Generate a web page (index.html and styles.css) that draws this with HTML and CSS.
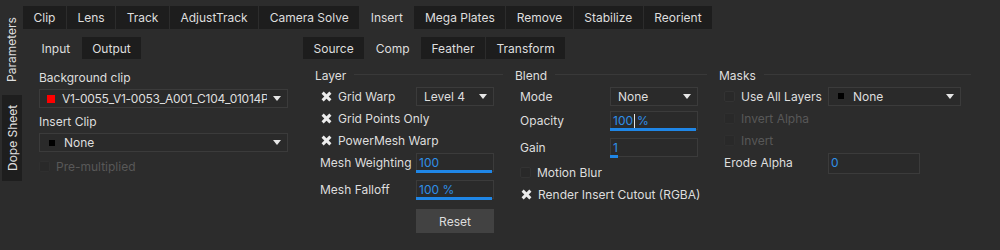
FILE: index.html
```html
<!DOCTYPE html>
<html lang="en">
<head>
    <meta charset="UTF-8">
    <title>Insert - Comp</title>
    <link rel="stylesheet" href="styles.css">
</head>
<body>
    <div class="app">
        <div class="side">
            <div class="vtab active">Parameters</div>
            <div class="vtab">Dope Sheet</div>
        </div>

        <div class="main">
            <div class="tabs top">
                <div class="tab">Clip</div>
                <div class="tab">Lens</div>
                <div class="tab">Track</div>
                <div class="tab">AdjustTrack</div>
                <div class="tab">Camera Solve</div>
                <div class="tab active">Insert</div>
                <div class="tab">Mega Plates</div>
                <div class="tab">Remove</div>
                <div class="tab">Stabilize</div>
                <div class="tab">Reorient</div>
            </div>

            <div class="panel">
                <!-- input / output side -->
                <div class="left">
                    <div class="tabs sub">
                        <div class="tab active">Input</div>
                        <div class="tab">Output</div>
                    </div>
                    <div class="left-body">
                        <div class="label first">Background clip</div>
                        <div class="select wide">
                            <span class="swatch red"></span>
                            <span class="value clip-name">V1-0055_V1-0053_A001_C104_01014P</span>
                            <span class="arrow"></span>
                        </div>
                        <div class="label">Insert Clip</div>
                        <div class="select wide">
                            <span class="swatch small"></span>
                            <span class="value">None</span>
                            <span class="arrow"></span>
                        </div>
                        <div class="check disabled premult"><span class="box"></span>Pre-multiplied</div>
                    </div>
                </div>

                <!-- comp side -->
                <div class="right">
                    <div class="tabs sub">
                        <div class="tab">Source</div>
                        <div class="tab active">Comp</div>
                        <div class="tab">Feather</div>
                        <div class="tab">Transform</div>
                    </div>

                    <div class="groups">
                        <div class="group layer">
                            <div class="group-title">Layer</div>
                            <div class="row">
                                <div class="check on w-layer"><span class="x"></span>Grid Warp</div>
                                <div class="select level"><span class="value">Level 4</span><span class="arrow"></span></div>
                            </div>
                            <div class="row">
                                <div class="check on"><span class="x"></span>Grid Points Only</div>
                            </div>
                            <div class="row">
                                <div class="check on"><span class="x"></span>PowerMesh Warp</div>
                            </div>
                            <div class="row field">
                                <div class="field-label w-layer">Mesh Weighting</div>
                                <div class="num level"><span class="value">100</span><span class="bar" style="width: 100%"></span></div>
                            </div>
                            <div class="row field">
                                <div class="field-label w-layer">Mesh Falloff</div>
                                <div class="num level"><span class="value">100 %</span><span class="bar" style="width: 100%"></span></div>
                            </div>
                            <div class="row btn-row">
                                <button class="reset">Reset</button>
                            </div>
                        </div>

                        <div class="group blend">
                            <div class="group-title">Blend</div>
                            <div class="row">
                                <div class="field-label w-blend">Mode</div>
                                <div class="select mode"><span class="value">None</span><span class="arrow"></span></div>
                            </div>
                            <div class="row field opacity-row">
                                <div class="field-label w-blend">Opacity</div>
                                <div class="num mode"><span class="value">100<span class="caret"></span>%</span><span class="bar" style="width: 100%"></span></div>
                            </div>
                            <div class="row field gain-row">
                                <div class="field-label w-blend">Gain</div>
                                <div class="num mode"><span class="value">1</span><span class="bar" style="width: 9%"></span></div>
                            </div>
                            <div class="row">
                                <div class="check"><span class="box"></span>Motion Blur</div>
                            </div>
                            <div class="row">
                                <div class="check on"><span class="x"></span>Render Insert Cutout (RGBA)</div>
                            </div>
                        </div>

                        <div class="group masks">
                            <div class="group-title">Masks</div>
                            <div class="row">
                                <div class="check w-masks"><span class="box"></span>Use All Layers</div>
                                <div class="select mask-sel">
                                    <span class="swatch small"></span>
                                    <span class="value">None</span>
                                    <span class="arrow"></span>
                                </div>
                            </div>
                            <div class="row">
                                <div class="check disabled"><span class="box"></span>Invert Alpha</div>
                            </div>
                            <div class="row">
                                <div class="check disabled"><span class="box"></span>Invert</div>
                            </div>
                            <div class="row field">
                                <div class="field-label w-masks">Erode Alpha</div>
                                <div class="num erode"><span class="value">0</span></div>
                            </div>
                        </div>
                    </div>
                </div>
            </div>
        </div>
    </div>
</body>
</html>
```

FILE: styles.css
```css
* {
    box-sizing: border-box;
}
body {
    margin: 0;
    background-color: #2c2c2c;
    color: #dedede;
    font-family: Inter, "Noto Sans", sans-serif;
    font-size: 12px;
}
.app {
    display: flex;
    width: 1000px;
    height: 250px;
    overflow: hidden;
}

/* vertical tabs on the left */
.side {
    width: 23px;
    display: flex;
    flex-direction: column;
    gap: 3px;
}
.vtab {
    writing-mode: vertical-rl;
    transform: rotate(180deg);
    display: flex;
    align-items: center;
    justify-content: center;
    width: 20px;
    margin-left: 2px;
    background-color: #1e1e1e;
}
.vtab.active {
    background-color: #2c2c2c;
    height: 84px;
    margin-top: 8px;
    margin-left: 0;
    width: 22px;
}
.vtab:not(.active) {
    height: 86px;
}

.main {
    flex: 1;
    display: flex;
    flex-direction: column;
}

/* tab rows */
.tabs {
    display: flex;
    gap: 1px;
}
.tab {
    background-color: #1d1d1d;
    padding: 0 10.5px;
    display: flex;
    align-items: center;
}
.tab.active {
    background-color: #2c2c2c;
}
.tabs.top {
    margin-top: 6px;
    height: 23px;
}
.tabs.sub {
    height: 22px;
}

.panel {
    display: flex;
    margin-top: 8px;
}
.left {
    width: 280px;
    padding-left: 8px;
}
.left-body {
    padding-left: 8px;
}
.right {
    flex: 1;
}

.label {
    height: 19px;
    display: flex;
    align-items: center;
    margin-top: 4px;
    margin-bottom: 2px;
}
.label.first {
    margin-top: 9px;
    margin-bottom: 2px;
}

/* dropdowns and number fields */
.select, .num {
    height: 19px;
    border: 1px solid #3b3b3b;
    background-color: #2a2a2a;
    display: flex;
    align-items: center;
    padding: 0 6px 0 7px;
    position: relative;
}
.select .value {
    flex: 1;
    white-space: nowrap;
    overflow: hidden;
}
.clip-name {
    letter-spacing: -0.25px;
}
.select.wide {
    width: 249px;
}
.arrow {
    width: 0;
    height: 0;
    border-left: 4px solid transparent;
    border-right: 4px solid transparent;
    border-top: 5px solid #e6e6e6;
    margin-left: 6px;
}
.swatch {
    width: 8px;
    height: 8px;
    background-color: #000;
    margin-right: 7px;
}
.swatch.red {
    background-color: #ff0000;
}
.swatch.small {
    width: 6px;
    height: 6px;
    margin-right: 9px;
    margin-left: 2px;
}

.num {
    color: #2f8fe8;
    padding-left: 2px;
    align-items: flex-start;
    padding-top: 1px;
}
.num .bar {
    position: absolute;
    left: -1px;
    bottom: -2px;
    height: 3px;
    background-color: #1f86e6;
}
.caret {
    display: inline-block;
    width: 1px;
    height: 14px;
    background-color: #e6e6e6;
    vertical-align: -3px;
    margin: 0 2px 0 1px;
}

/* checkboxes */
.check {
    display: flex;
    align-items: center;
    white-space: nowrap;
}
.check .box {
    width: 11px;
    height: 11px;
    border: 1px solid #333;
    background-color: #292929;
    border-radius: 2px;
    margin-right: 6px;
}
.check .x {
    width: 9px;
    height: 9px;
    margin: 0 7px 0 2px;
    position: relative;
}
.check .x::before, .check .x::after {
    content: "";
    position: absolute;
    left: -1px;
    top: 3px;
    width: 11px;
    height: 3px;
    background-color: #ececec;
    transform: rotate(45deg);
}
.check .x::after {
    transform: rotate(-45deg);
}
.check.disabled {
    color: #585858;
}
.check.disabled .box {
    border-color: #2f2f2f;
}
.premult {
    height: 22px;
    margin-top: 3px;
}

/* option groups */
.groups {
    display: flex;
    margin-top: 8px;
}
.group {
    padding-left: 12px;
}
.group.layer {
    width: 200px;
}
.group.blend {
    width: 204px;
}
.group.masks {
    width: 264px;
}
.group-title {
    display: flex;
    align-items: center;
    height: 17px;
    margin-bottom: 1px;
}
.group-title::after {
    content: "";
    flex: 1;
    height: 1px;
    background-color: #393939;
    margin-left: 8px;
    margin-top: -3px;
}
.row {
    display: flex;
    align-items: center;
    height: 22px;
    padding-left: 5px;
}
.row.field {
    height: 27px;
    align-items: flex-start;
    padding-top: 2px;
}
.row.field .field-label {
    height: 19px;
    display: flex;
    align-items: center;
}
.row.opacity-row {
    height: 29px;
    padding-top: 4px;
}
.row.gain-row {
    height: 25px;
}
.w-layer {
    width: 96px;
}
.w-blend {
    width: 90px;
}
.w-masks {
    width: 104px;
}
.level {
    width: 78px;
}
.mode {
    width: 88px;
}
.mask-sel {
    width: 133px;
}
.num.erode {
    width: 92px;
    height: 21px;
}
.btn-row {
    height: 32px;
    padding-left: 101px;
}
.reset {
    width: 78px;
    height: 24px;
    background-color: #424242;
    border: none;
    color: #dedede;
    font-family: Inter, "Noto Sans", sans-serif;
    font-size: 12px;
}
```
